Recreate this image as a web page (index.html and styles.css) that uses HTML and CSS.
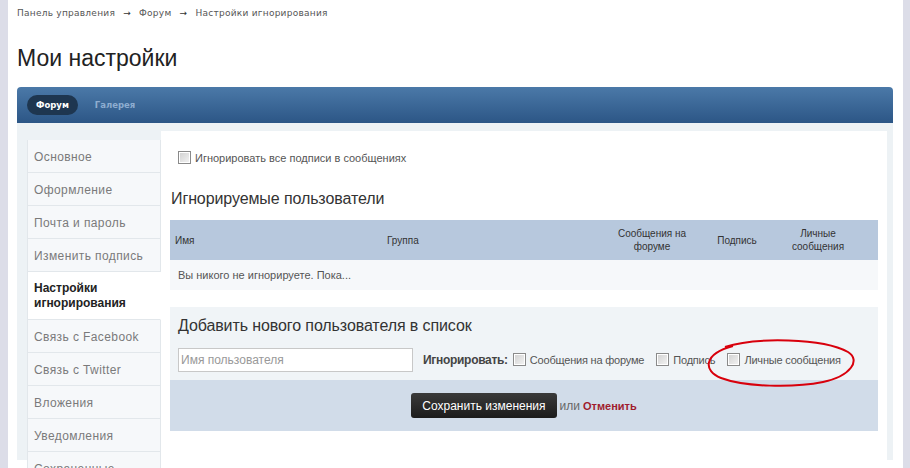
FILE: index.html
```html
<!doctype html>
<html lang="ru">
  <head>
    <meta charset="utf-8">
    <title>Мои настройки</title>
    <link rel="stylesheet" href="styles.css">
  </head>
  <body>
    <div class="page">
      <div class="crumbs">
        <a href="#">Панель управления</a> <span class="arrow">&rarr;</span>
        <a href="#">Форум</a> <span class="arrow">&rarr;</span>
        <a href="#">Настройки игнорирования</a>
      </div>

      <h1 class="title">Мои настройки</h1>

      <nav class="tabs">
        <a class="tab active" href="#">Форум</a>
        <a class="tab" href="#">Галерея</a>
      </nav>

      <div class="container">
        <ul class="sidebar">
          <li><a href="#">Основное</a></li>
          <li><a href="#">Оформление</a></li>
          <li><a href="#">Почта и пароль</a></li>
          <li><a href="#">Изменить подпись</a></li>
          <li class="current"><a href="#">Настройки игнорирования</a></li>
          <li><a href="#">Связь с Facebook</a></li>
          <li><a href="#">Связь с Twitter</a></li>
          <li><a href="#">Вложения</a></li>
          <li><a href="#">Уведомления</a></li>
          <li><a href="#">Сохраненные</a></li>
        </ul>

        <div class="main">
          <label class="check top-check"><input type="checkbox"> Игнорировать все подписи в сообщениях</label>

          <h2 class="section-title">Игнорируемые пользователи</h2>

          <table class="ignored">
            <thead>
              <tr>
                <th class="col-name">Имя</th>
                <th class="col-group">Группа</th>
                <th class="col-c col-msg">Сообщения на<br>форуме</th>
                <th class="col-c col-sig">Подпись</th>
                <th class="col-c col-pm">Личные<br>сообщения</th>
                <th class="col-end"></th>
              </tr>
            </thead>
            <tbody>
              <tr>
                <td colspan="6" class="empty">Вы никого не игнорируете. Пока...</td>
              </tr>
            </tbody>
          </table>

          <form class="add-box">
            <h3 class="add-title">Добавить нового пользователя в список</h3>
            <div class="add-row">
              <input class="username" type="text" placeholder="Имя пользователя">
              <b class="ignore-label">Игнорировать:</b>
              <label class="check"><input type="checkbox"> Сообщения на форуме</label>
              <label class="check"><input type="checkbox"> Подпись</label>
              <label class="check"><input type="checkbox"> Личные сообщения</label>
              <svg class="mark" width="152" height="50" viewBox="0 0 152 50">
                <path d="M20 9 C50 -1 118 0 143 14 C156 22 146 38 118 44 C88 50 40 49 16 40 C-2 33 -2 16 28 8" fill="none" stroke="#d8000c" stroke-width="2"/>
              </svg>
            </div>
            <div class="buttons">
              <button type="button" class="save">Сохранить изменения</button>
              <span class="or">или</span> <a class="cancel" href="#">Отменить</a>
            </div>
          </form>
        </div>
      </div>
    </div>
  </body>
</html>
```

FILE: styles.css
```css
html {
  margin: 0;
}

body {
  margin: 0;
  background-color: #ffffff;
  border-left: 8px solid #dcdde8;
  border-right: 7px solid #dcdde8;
  min-height: 468px;
  box-sizing: border-box;
  color: #333333;
  font-family: "Liberation Sans", Arial, sans-serif;
}

a {
  text-decoration: none;
}

.page {
  padding: 0 10px 0 9px;
}

.crumbs {
  padding-top: 8px;
  height: 14px;
  font-family: "DejaVu Sans", Verdana, sans-serif;
  font-size: 9px;
  letter-spacing: 0.25px;
  color: #555555;
}

.crumbs a {
  color: #555555;
}

.crumbs .arrow {
  margin: 0 5px;
  color: #333333;
}

.title {
  margin: 22px 0 0;
  height: 43px;
  font-size: 23px;
  font-weight: normal;
  line-height: 28px;
  color: #222222;
}

.tabs {
  display: flex;
  align-items: center;
  height: 36px;
  padding: 0 10px;
  border-radius: 4px 4px 0 0;
  background: linear-gradient(#4b79a8, #2c5686);
  font-family: "DejaVu Sans", Verdana, sans-serif;
  font-size: 8.5px;
  font-weight: bold;
}

.tab {
  padding: 5px 9px;
  margin-right: 8px;
  border-radius: 10px;
  color: #8eadd0;
}

.tab.active {
  background-color: #1e3650;
  color: #ffffff;
}

.container {
  display: flex;
  align-items: flex-start;
  padding: 8px 6px 0 10px;
  background-color: #edf2f5;
  height: 337px;
  box-sizing: border-box;
}

.sidebar {
  list-style: none;
  margin: 9px 0 0;
  padding: 0;
  width: 133px;
  flex: none;
  border-left: 1px solid #e2e7eb;
}

.sidebar li {
  border-bottom: 1px solid #e2e7eb;
  border-right: 1px solid #e2e7eb;
  background-color: #f6f8fa;
}

.sidebar a {
  display: block;
  padding: 10px 6px 7px;
  font-size: 12px;
  line-height: 15px;
  letter-spacing: 0.4px;
  color: #7a7a7a;
}

.sidebar li.current {
  background-color: #ffffff;
  border-right-color: #ffffff;
}

.sidebar li.current a {
  padding: 9px 6px 8px;
  font-weight: bold;
  letter-spacing: 0;
  color: #222222;
}

.main {
  flex: 1;
  align-self: stretch;
  background-color: #ffffff;
  padding: 0 9px;
}

.check {
  display: inline-flex;
  align-items: center;
  font-size: 11px;
  color: #555555;
}

.check input {
  appearance: none;
  -webkit-appearance: none;
  width: 13px;
  height: 13px;
  margin: 0 4px 0 0;
  border: 1px solid #8a8a8a;
  background: linear-gradient(135deg, #d0d0d0, #f4f4f4);
  box-shadow: inset 0 0 0 1px #ffffff;
  box-sizing: border-box;
}

.top-check {
  margin: 20px 0 0 8px;
}

.section-title {
  margin: 0;
  padding: 22px 0 0 1px;
  height: 30px;
  font-size: 16px;
  font-weight: normal;
  line-height: 18px;
  letter-spacing: -0.1px;
  color: #333333;
}

.ignored {
  width: 100%;
  table-layout: fixed;
  border-collapse: collapse;
  font-size: 10px;
}

.ignored th {
  height: 40px;
  padding: 0 5px;
  background-color: #b7c8dd;
  font-weight: normal;
  line-height: 13px;
  text-align: left;
  color: #333333;
}

.ignored .col-name {
  width: 202px;
}

.ignored .col-group {
  width: 220px;
}

.ignored .col-c {
  padding: 0;
  text-align: center;
}

.ignored .col-msg {
  width: 80px;
}

.ignored .col-sig {
  width: 90px;
}

.ignored .col-pm {
  width: 72px;
}

.ignored .empty {
  height: 30px;
  padding: 0 8px;
  background-color: #f6f8fa;
  font-size: 11px;
  color: #555555;
}

.add-box {
  margin: 17px 0 0;
  background-color: #f0f4f7;
}

.add-title {
  margin: 0;
  padding: 10px 8px 0;
  height: 32px;
  box-sizing: border-box;
  font-size: 16px;
  font-weight: normal;
  line-height: 18px;
  letter-spacing: -0.1px;
  color: #333333;
}

.add-row {
  position: relative;
  display: flex;
  align-items: center;
  height: 41px;
  padding: 0 8px;
}

.username {
  width: 235px;
  height: 24px;
  margin: 0 10px 0 0;
  padding: 0 2px;
  border: 1px solid #c8c8c8;
  box-sizing: border-box;
  font-family: "Liberation Sans", Arial, sans-serif;
  font-size: 12px;
}

.username::placeholder {
  color: #999999;
}

.ignore-label {
  margin-right: 5px;
  font-size: 12px;
  letter-spacing: -0.3px;
  color: #444444;
}

.add-row .check {
  margin-right: 12px;
  letter-spacing: -0.2px;
}

.mark {
  position: absolute;
  left: 535px;
  top: -1px;
}

.buttons {
  display: flex;
  align-items: center;
  justify-content: center;
  gap: 3px;
  height: 51px;
  background-color: #d1dce9;
  font-size: 12px;
}

.save {
  height: 25px;
  padding: 0 11px;
  border: 0;
  border-radius: 3px;
  background: linear-gradient(#3a3a3a, #1c1c1c);
  font-family: "Liberation Sans", Arial, sans-serif;
  font-size: 12px;
  color: #ffffff;
}

.or {
  color: #666666;
}

.cancel {
  font-weight: bold;
  font-size: 11px;
  color: #a01c2e;
}
```
